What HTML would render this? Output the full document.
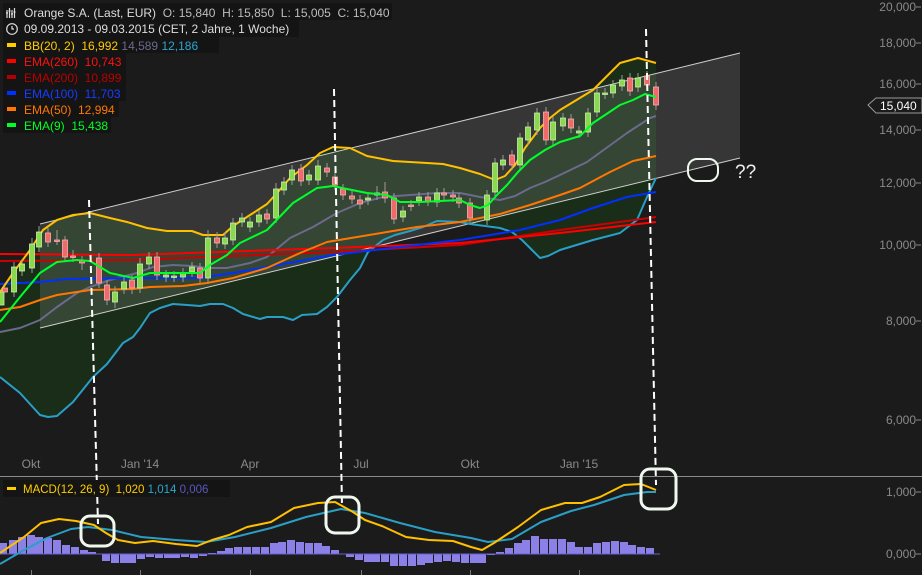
<!DOCTYPE html>
<html><head><meta charset="utf-8"><style>
html,body{margin:0;padding:0;background:#1c1b1b;}
body{width:922px;height:575px;overflow:hidden;position:relative;font-family:"Liberation Sans",sans-serif;}
svg{position:absolute;left:0;top:0;}
.ax{fill:#8a8a8a;font-size:12px;font-family:"Liberation Sans",sans-serif;}
.lg{font-size:12px;font-family:"Liberation Sans",sans-serif;}
</style></head><body>
<svg width="922" height="575" viewBox="0 0 922 575" xmlns="http://www.w3.org/2000/svg">
<rect width="922" height="575" fill="#1c1b1b"/>
<polygon fill="#1a2d18" points="0,292 13,273 30,250 43,230 57,220 73,215 90,213 110,218 127,222 147,228 167,231 192,231 203,235 223,235 233,226 250,215 267,204 277,193 290,178 307,165 320,153 333,147 350,148 367,156 393,161 427,163 443,164 460,168 480,174 495,180 505,176 515,165 525,148 540,128 550,118 560,110 593,90 620,63 638,58 656,63 656,178 647,197 637,220 620,233 593,240 560,250 548,256 540,258 532,250 522,240 512,232 500,228 485,226 470,224 460,222 437,221 423,227 410,231 395,235 383,240 368,252 360,268 350,280 337,297 327,307 317,314 302,315 293,320 283,317 267,317 260,319 243,314 233,308 223,304 210,304 200,306 187,305 173,304 160,308 150,313 140,328 133,337 123,343 107,364 93,377 73,402 57,416 48,417 40,415 20,393 0,377"/>
<polygon points="40,224 740,53 740,158 40,328" fill="rgba(255,255,255,0.12)"/>
<line x1="40" y1="224" x2="740" y2="53" stroke="#cfcfcf" stroke-width="1"/>
<line x1="40" y1="328" x2="740" y2="158" stroke="#cfcfcf" stroke-width="1"/>
<g fill="none" stroke-width="2" stroke-linejoin="round">
<polyline stroke="#2a9fc6" points="0,377 20,393 40,415 48,417 57,416 73,402 93,377 107,364 123,343 133,337 140,328 150,313 160,308 173,304 187,305 200,306 210,304 223,304 233,308 243,314 260,319 267,317 283,317 293,320 302,315 317,314 327,307 337,297 350,280 360,268 368,252 383,240 395,235 410,231 423,227 437,221 460,222 470,224 485,226 500,228 512,232 522,240 532,250 540,258 548,256 560,250 593,240 620,233 637,220 647,197 656,178"/>
<polyline stroke="#6c6a8c" points="0,332 20,328 40,320 57,307 77,293 90,287 110,280 137,273 153,267 173,265 193,266 207,268 227,268 250,263 267,257 290,238 313,227 337,213 360,203 383,197 410,195 437,193 460,193 480,197 500,200 515,196 530,188 545,182 560,175 587,162 627,133 650,118 656,116"/>
<polyline stroke="#cc0000" points="0,261 133,260 333,252 460,245 560,230 656,217"/>
<polyline stroke="#ff0000" points="0,254 133,255 333,248 460,243 560,233 656,222"/>
<polyline stroke="#0030ff" points="0,284 40,282 67,279 133,278 200,278 233,273 267,267 333,255 400,247 460,240 520,230 560,220 593,208 627,197 656,192"/>
<polyline stroke="#ff7700" points="0,310 20,307 40,300 57,295 90,290 133,289 150,287 183,286 207,283 233,278 267,268 300,253 327,242 357,237 387,232 417,227 460,222 500,214 530,205 560,195 580,188 610,172 633,161 656,156"/>
<polyline stroke="#ffc000" points="0,292 13,273 30,250 43,230 57,220 73,215 90,213 110,218 127,222 147,228 167,231 192,231 203,235 223,235 233,226 250,215 267,204 277,193 290,178 307,165 320,153 333,147 350,148 367,156 393,161 427,163 443,164 460,168 480,174 495,180 505,176 515,165 525,148 540,128 550,118 560,110 593,90 620,63 638,58 656,63"/>
</g>
<g stroke="#9a9a9a" stroke-width="1">
<path d="M14,262V297M22,259V276M32,238V273M39,226V252M48,228V247M57,230V245M65,236V262M73,250V262M82,256V270M99,253V288M107,280V305M115,286V308M124,276V294M132,275V294M140,258V293M149,252V269M157,252V280M166,270V282M174,271V282M183,268V282M192,262V277M200,263V283M208,230V283M217,232V248M225,232V249M233,218V245M242,213V227M250,217V232M259,210V227M267,209V224M276,183V223M284,177V195M292,165V185M301,164V186M309,170V185M318,160V185M327,163V177M335,172V190M343,184V200M352,191V204M360,195V209M368,193V205M377,186V200M385,182V203M394,193V224M403,206V222M411,200V211M419,192V206M428,192V206M437,188V207M444,188V200M453,190V202M459,193V208M470,198V223M487,190V225M495,158V197M503,155V170M512,150V170M520,133V170M528,122V145M537,108V135M546,107V145M553,117V145M563,113V131M571,114V133M579,126V138M588,108V137M597,88V117M605,88V99M613,80V98M622,75V91M630,73V96M638,73V92M647,71V90M656,82V110"/>
</g>
<g fill="#8ad84e" stroke="#c8f0a8" stroke-width="0.8">
<rect x="-1" y="292" width="5" height="13"/><rect x="11.5" y="267" width="5" height="25"/><rect x="19.5" y="264" width="5" height="7"/><rect x="29.5" y="244" width="5" height="24"/><rect x="36.5" y="232" width="5" height="15"/><rect x="112.5" y="292" width="5" height="10"/><rect x="121.5" y="282" width="5" height="7"/><rect x="137.5" y="264" width="5" height="24"/><rect x="146.5" y="257" width="5" height="7"/><rect x="163.5" y="275" width="5" height="2"/><rect x="171.5" y="276" width="5" height="1.5"/><rect x="180.5" y="273" width="5" height="4"/><rect x="189.5" y="267" width="5" height="5"/><rect x="205.5" y="238" width="5" height="40"/><rect x="222.5" y="238" width="5" height="6"/><rect x="230.5" y="223" width="5" height="17"/><rect x="239.5" y="218" width="5" height="4"/><rect x="247.5" y="222" width="5" height="5"/><rect x="256.5" y="215" width="5" height="7"/><rect x="273.5" y="189" width="5" height="29"/><rect x="281.5" y="182" width="5" height="8"/><rect x="289.5" y="170" width="5" height="10"/><rect x="306.5" y="175" width="5" height="5"/><rect x="315.5" y="166" width="5" height="14"/><rect x="365.5" y="198" width="5" height="2"/><rect x="374.5" y="193" width="5" height="2"/><rect x="400.5" y="211" width="5" height="6"/><rect x="416.5" y="197" width="5" height="4"/><rect x="434.5" y="193" width="5" height="9"/><rect x="484.5" y="195" width="5" height="25"/><rect x="492.5" y="163" width="5" height="29"/><rect x="500.5" y="160" width="5" height="5"/><rect x="517.5" y="138" width="5" height="27"/><rect x="525.5" y="127" width="5" height="13"/><rect x="534.5" y="113" width="5" height="17"/><rect x="550.5" y="122" width="5" height="18"/><rect x="560.5" y="118" width="5" height="8"/><rect x="576.5" y="131" width="5" height="2"/><rect x="585.5" y="113" width="5" height="19"/><rect x="594.5" y="93" width="5" height="19"/><rect x="602.5" y="93" width="5" height="1.5"/><rect x="610.5" y="85" width="5" height="8"/><rect x="619.5" y="80" width="5" height="6"/><rect x="635.5" y="78" width="5" height="9"/>
</g>
<g fill="#f06a6a" stroke="#f8b0b0" stroke-width="0.8">
<rect x="2.5" y="288" width="5" height="4"/><rect x="45.5" y="233" width="5" height="9"/><rect x="54.5" y="240" width="5" height="1.5"/><rect x="62.5" y="240" width="5" height="17"/><rect x="70.5" y="256" width="5" height="1.5"/><rect x="79.5" y="261" width="5" height="2"/><rect x="96.5" y="258" width="5" height="25"/><rect x="104.5" y="285" width="5" height="15"/><rect x="129.5" y="280" width="5" height="8"/><rect x="154.5" y="257" width="5" height="18"/><rect x="197.5" y="268" width="5" height="10"/><rect x="214.5" y="238" width="5" height="5"/><rect x="264.5" y="214" width="5" height="5"/><rect x="298.5" y="169" width="5" height="12"/><rect x="324.5" y="168" width="5" height="4"/><rect x="332.5" y="177" width="5" height="8"/><rect x="340.5" y="189" width="5" height="6"/><rect x="349.5" y="196" width="5" height="3"/><rect x="357.5" y="200" width="5" height="4"/><rect x="382.5" y="192" width="5" height="6"/><rect x="391.5" y="198" width="5" height="21"/><rect x="408.5" y="205" width="5" height="1.5"/><rect x="425.5" y="197" width="5" height="4"/><rect x="441.5" y="193" width="5" height="2"/><rect x="450.5" y="195" width="5" height="2"/><rect x="456.5" y="198" width="5" height="5"/><rect x="467.5" y="203" width="5" height="15"/><rect x="509.5" y="155" width="5" height="10"/><rect x="543.5" y="112" width="5" height="28"/><rect x="568.5" y="119" width="5" height="9"/><rect x="627.5" y="78" width="5" height="13"/><rect x="644.5" y="76" width="5" height="9"/><rect x="653.5" y="87" width="5" height="18"/>
</g>
<polyline fill="none" stroke="#00ff2a" stroke-width="2" stroke-linejoin="round" points="0,322 20,297 40,273 57,262 77,260 90,261 100,267 110,273 133,278 150,273 183,273 200,273 210,265 227,255 240,243 267,230 293,203 317,188 333,186 347,189 367,193 387,195 400,202 420,202 460,200 470,205 480,208 488,205 497,195 507,185 518,172 530,160 545,150 560,142 580,136 593,123 620,105 633,100 645,94 656,97"/>

<line x1="0" y1="476.5" x2="922" y2="476.5" stroke="#8a8a8a" stroke-width="1"/>
<g class="ax" text-anchor="middle">
<text x="31" y="468">Okt</text><text x="140" y="468">Jan '14</text><text x="250" y="468">Apr</text><text x="361" y="468">Jul</text><text x="470" y="468">Okt</text><text x="579" y="468">Jan '15</text>
</g>
<g stroke="#777" stroke-width="1">
<path d="M31.5,570V575M140.5,570V575M250.5,570V575M361.5,570V575M470.5,570V575M579.5,570V575"/>
</g>
<g class="ax" text-anchor="end">
<text x="916" y="11">20,000</text><text x="916" y="47">18,000</text><text x="916" y="88">16,000</text><text x="916" y="134">14,000</text><text x="916" y="187">12,000</text><text x="916" y="249">10,000</text><text x="916" y="325">8,000</text><text x="916" y="424">6,000</text><text x="916" y="496">1,000</text><text x="916" y="558">0,000</text>
</g>
<g stroke="#8a8a8a"><path d="M916,7H921M916,43H921M916,84H921M916,130H921M916,183H921M916,245H921M916,321H921M916,420H921M916,492H921M916,554H921"/></g>
<polygon points="868,105 876,98 922,98 922,113 876,113" fill="#1c1b1b" stroke="#9a9a9a" stroke-width="1"/>
<text x="880" y="110" fill="#ffffff" font-size="12" font-family="Liberation Sans, sans-serif">15,040</text>

<g fill="#8a80e6">
<rect x="-1" y="543" width="8" height="11"/><rect x="9" y="540" width="8" height="14"/><rect x="18" y="537" width="8" height="17"/><rect x="27" y="535" width="8" height="19"/><rect x="35" y="537" width="8" height="17"/><rect x="44" y="538" width="8" height="16"/><rect x="53" y="540" width="8" height="14"/><rect x="62" y="545" width="8" height="9"/><rect x="71" y="547" width="8" height="7"/><rect x="80" y="550" width="8" height="4"/><rect x="88" y="552" width="8" height="2"/>
<rect x="102" y="554" width="8" height="7"/><rect x="111" y="554" width="8" height="9"/><rect x="120" y="554" width="8" height="9"/><rect x="128" y="554" width="8" height="9"/><rect x="137" y="554" width="8" height="5"/><rect x="146" y="554" width="8" height="3"/><rect x="155" y="554" width="8" height="4"/><rect x="164" y="554" width="8" height="4"/><rect x="172" y="554" width="8" height="4"/><rect x="181" y="554" width="8" height="3"/><rect x="190" y="554" width="8" height="4"/><rect x="199" y="554" width="8" height="2"/>
<rect x="208" y="553" width="8" height="1"/><rect x="217" y="551" width="8" height="3"/><rect x="225" y="548" width="8" height="6"/><rect x="234" y="547" width="8" height="7"/><rect x="243" y="547" width="8" height="7"/><rect x="252" y="547" width="8" height="7"/><rect x="261" y="547" width="8" height="7"/><rect x="270" y="543" width="8" height="11"/><rect x="278" y="542" width="8" height="12"/><rect x="287" y="540" width="8" height="14"/><rect x="296" y="542" width="8" height="12"/><rect x="305" y="543" width="8" height="11"/><rect x="314" y="543" width="8" height="11"/><rect x="322" y="546" width="8" height="8"/><rect x="331" y="550" width="8" height="4"/>
<rect x="346" y="554" width="8" height="3"/><rect x="355" y="554" width="8" height="6"/><rect x="364" y="554" width="8" height="8"/><rect x="372" y="554" width="8" height="8"/><rect x="381" y="554" width="8" height="8"/><rect x="390" y="554" width="8" height="12"/><rect x="399" y="554" width="8" height="12"/><rect x="408" y="554" width="8" height="12"/><rect x="417" y="554" width="8" height="11"/><rect x="425" y="554" width="8" height="9"/><rect x="434" y="554" width="8" height="8"/><rect x="443" y="554" width="8" height="7"/><rect x="452" y="554" width="8" height="8"/><rect x="461" y="554" width="8" height="9"/><rect x="470" y="554" width="8" height="9"/><rect x="478" y="554" width="8" height="9"/><rect x="487" y="554" width="8" height="1"/>
<rect x="496" y="552" width="8" height="2"/><rect x="505" y="548" width="8" height="6"/><rect x="514" y="543" width="8" height="11"/><rect x="522" y="540" width="8" height="14"/><rect x="531" y="536" width="8" height="18"/><rect x="540" y="539" width="8" height="15"/><rect x="549" y="539" width="8" height="15"/><rect x="558" y="539" width="8" height="15"/><rect x="567" y="542" width="8" height="12"/><rect x="575" y="547" width="8" height="7"/><rect x="584" y="547" width="8" height="7"/><rect x="593" y="543" width="8" height="11"/><rect x="602" y="542" width="8" height="12"/><rect x="611" y="541" width="8" height="13"/><rect x="620" y="542" width="8" height="12"/><rect x="628" y="545" width="8" height="9"/><rect x="637" y="547" width="8" height="7"/><rect x="646" y="548" width="8" height="6"/>
</g>
<line x1="0" y1="554" x2="660" y2="554" stroke="#6a5fd0" stroke-width="1"/>
<polyline fill="none" stroke="#2a9fc6" stroke-width="2" stroke-linejoin="round" points="0,564 24,550 47,538 71,529 88,527 112,530 141,537 176,540 206,542 235,537 271,528 306,517 341,509 365,513 400,523 435,532 471,538 488,542 512,539 541,522 571,511 594,505 624,495 647,492 656,492"/>
<polyline fill="none" stroke="#ffc000" stroke-width="2" stroke-linejoin="round" points="0,553 24,537 41,523 59,519 76,521 94,525 106,533 118,540 135,543 153,541 176,544 197,546 212,540 229,535 247,527 271,522 294,508 318,503 335,502 353,512 365,520 382,526 406,537 429,540 453,541 471,547 482,550 494,543 518,527 541,510 565,503 582,503 600,497 624,485 641,484 656,490"/>

<g stroke="#ffffff" stroke-width="2" stroke-dasharray="7,4" fill="none">
<line x1="89" y1="200" x2="98" y2="524"/>
<line x1="334" y1="89" x2="342" y2="506"/>
<line x1="646" y1="29" x2="656" y2="485"/>
</g>
<g fill="none" stroke="#eef8ee" stroke-width="3">
<rect x="81" y="516" width="33" height="30" rx="9"/>
<rect x="326" y="497" width="33" height="36" rx="9"/>
<rect x="641" y="469" width="35" height="40" rx="9"/>
<rect x="688" y="159" width="30" height="22" rx="9" stroke-width="2"/>
</g>
<text x="735" y="178" fill="#f0f0f0" font-size="19" font-family="Liberation Sans, sans-serif">??</text>

<g>
<rect x="3" y="3" width="389" height="17" fill="#141414"/>
<rect x="3" y="20" width="296" height="17" fill="#141414"/>
<rect x="3" y="37" width="216" height="16" fill="#141414"/>
<rect x="3" y="53" width="123" height="16" fill="#141414"/>
<rect x="3" y="69" width="123" height="16" fill="#141414"/>
<rect x="3" y="85" width="123" height="16" fill="#141414"/>
<rect x="3" y="101" width="116" height="16" fill="#141414"/>
<rect x="3" y="117" width="108" height="16" fill="#141414"/>
<rect x="3" y="480" width="227" height="17" fill="#141414"/>
</g>
<g stroke="#dddddd" stroke-width="1.2" fill="none">
<path d="M7,10V18M9.5,8V18M12,10V18M14.5,8V18M6,13H8M8.5,11H10.5M11,14H13M13.5,12H15.5"/>
<circle cx="12" cy="29" r="5.3"/><path d="M12,26V29H14"/>
</g>
<g class="lg">
<text x="24" y="17" fill="#dddddd">Orange S.A. (Last, EUR)&#160;&#160;<tspan fill="#bdbdbd">O: 15,840&#160;&#160;H: 15,850&#160;&#160;L: 15,005&#160;&#160;C: 15,040</tspan></text>
<text x="24" y="33" fill="#dddddd">09.09.2013 - 09.03.2015 (CET, 2 Jahre, 1 Woche)</text>
<rect x="7" y="43" width="9" height="4" fill="#ffcc00"/><text x="24" y="50" fill="#ffcc00">BB(20, 2)&#160;&#160;16,992&#160;<tspan fill="#6a6a8e">14,589</tspan>&#160;<tspan fill="#2aa7d0">12,186</tspan></text>
<rect x="7" y="59" width="9" height="4" fill="#ff0000"/><text x="24" y="66" fill="#ff1010">EMA(260)&#160;&#160;10,743</text>
<rect x="7" y="75" width="9" height="4" fill="#b00000"/><text x="24" y="82" fill="#b80000">EMA(200)&#160;&#160;10,899</text>
<rect x="7" y="91" width="9" height="4" fill="#0030ff"/><text x="24" y="98" fill="#1a3cff">EMA(100)&#160;&#160;11,703</text>
<rect x="7" y="107" width="9" height="4" fill="#ff7700"/><text x="24" y="114" fill="#ff7700">EMA(50)&#160;&#160;12,994</text>
<rect x="7" y="123" width="9" height="4" fill="#00ff22"/><text x="24" y="130" fill="#00ff22">EMA(9)&#160;&#160;15,438</text>
<rect x="7" y="487" width="9" height="3" fill="#ffcc00"/><text x="23" y="493" fill="#ffcc00" font-size="11.5">MACD(12, 26, 9)&#160;&#160;1,020&#160;<tspan fill="#2aa7d0">1,014</tspan>&#160;<tspan fill="#5a56c0">0,006</tspan></text>
</g>
</svg>
</body></html>
